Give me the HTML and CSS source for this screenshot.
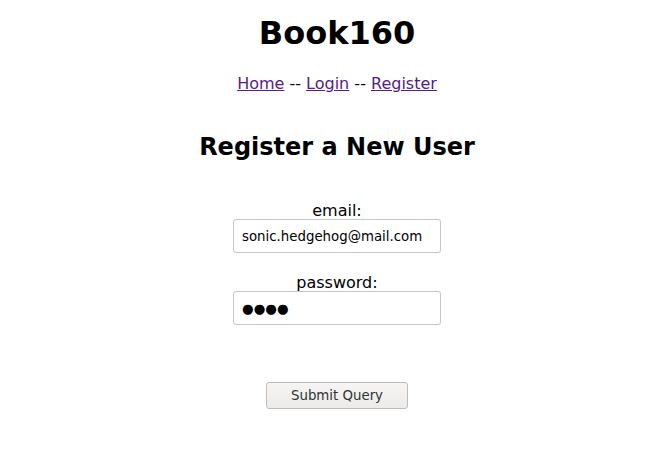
FILE: index.html
```html
<!DOCTYPE html>
<html>
<head>
<meta charset="utf-8">
<title>Book160</title>
<link rel="stylesheet" href="styles.css">
</head>
<body>
<div class="page">
  <h1 class="title">Book160</h1>
  <nav class="nav"><a href="#">Home</a> -- <a href="#">Login</a> -- <a href="#">Register</a></nav>
  <h2 class="heading">Register a New User</h2>
  <form class="form">
    <label class="field">
      <span class="label">email:</span>
      <input class="input" type="text" value="sonic.hedgehog@mail.com">
    </label>
    <label class="field">
      <span class="label">password:</span>
      <input class="input dots" type="text" value="●●●●">
    </label>
    <button class="submit" type="button">Submit Query</button>
  </form>
</div>
</body>
</html>
```
FILE: styles.css
```css
html, body {
  margin: 0;
  padding: 0;
  background: #fff;
}
body {
  font-family: "DejaVu Sans", sans-serif;
  font-size: 16px;
  color: #000;
}
.page {
  display: flex;
  flex-direction: column;
  align-items: center;
  text-align: center;
  padding-left: 25px;
}
.title {
  font-size: 32px;
  font-weight: bold;
  line-height: 37px;
  margin: 15px 0 0;
}
.nav {
  margin-top: 22px;
  line-height: 19px;
}
.nav a {
  color: #551a8b;
  text-decoration: underline;
}
.heading {
  font-size: 24px;
  font-weight: bold;
  line-height: 28px;
  margin: 40px 0 0;
}
.form {
  display: flex;
  flex-direction: column;
  align-items: center;
  margin-top: 41px;
}
.field {
  display: flex;
  flex-direction: column;
  align-items: center;
  margin-bottom: 21px;
}
.label {
  line-height: 17px;
  display: block;
}
.input {
  box-sizing: border-box;
  width: 208px;
  height: 34px;
  margin: 0;
  border: 1px solid #c9c5c0;
  border-radius: 3px;
  padding: 0 8px;
  font-family: "DejaVu Sans", sans-serif;
  font-size: 13.333px;
  color: #000;
  background: #fff;
  outline: none;
}
.submit {
  margin-top: 36px;
  box-sizing: border-box;
  width: 142px;
  height: 27px;
  border: 1px solid #bfbbb6;
  border-radius: 3px;
  background: linear-gradient(#f6f5f4, #edebe9);
  font-family: "DejaVu Sans", sans-serif;
  font-size: 13.333px;
  color: #2e3436;
  padding: 0;
}
```
